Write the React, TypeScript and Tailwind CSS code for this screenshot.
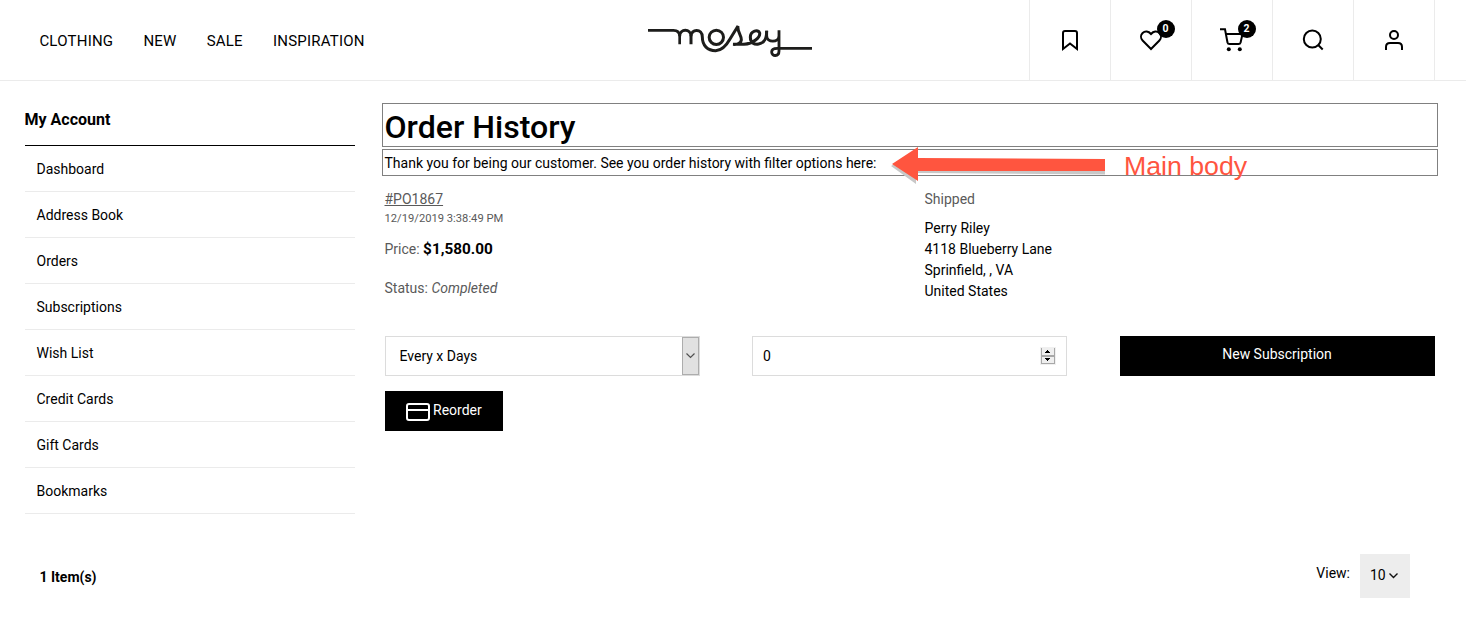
import React from "react";

const navItems = ["CLOTHING", "NEW", "SALE", "INSPIRATION"];

const accountLinks = [
  "Dashboard",
  "Address Book",
  "Orders",
  "Subscriptions",
  "Wish List",
  "Credit Cards",
  "Gift Cards",
  "Bookmarks",
];

function Logo() {
  return (
    <svg width="180" height="50" viewBox="0 0 540 150" fill="none" stroke="#1d1d1b" strokeWidth="9" aria-label="mosey">
      <path d="M24 46H100C113 46 119 53 119 64V88" strokeWidth="8" />
      <path d="M119 64C119 40 153 40 153 64V88" />
      <path d="M153 64C153 40 187 40 187 66C187 92 203 107 227 107C249 107 261 88 270 72L294 33C291 50 305 62 304 75C302 88 292 89 279 88H312C340 86 361 67 359 54C355 42 331 47 331 67C331 85 344 89 356 87C372 84 380 74 380 47" />
      <circle cx="229" cy="67" r="21.500" />
      <path d="M380 47V62C380 84 417 84 417 62V46V108C417 126 395 125 395 111C395 102 402 100 412 100H516" strokeWidth="8.500" />
    </svg>
  );
}

function Badge({ count }: { count: number }) {
  return (
    <span className="absolute left-[46px] top-5 flex size-[18px] items-center justify-center rounded-full bg-black pr-px text-[10.5px] font-bold text-white">
      {count}
    </span>
  );
}

function IconCell({ children }: { children: React.ReactNode }) {
  return (
    <div className="relative flex w-[81px] items-center justify-center border-l border-[#ebebeb]">{children}</div>
  );
}

const line = {
  width: 24,
  height: 24,
  viewBox: "0 0 24 24",
  fill: "none",
  stroke: "#000",
  strokeWidth: 2,
} as const;

function Header() {
  return (
    <header className="flex h-[81px] border-b border-[#ebebeb]">
      <nav className="flex w-[640px] items-center gap-[30.1px] pl-[39.4px] pt-[3px] text-[15px] tracking-[0.22px]">
        {navItems.map((item) => (
          <a key={item}>{item}</a>
        ))}
      </nav>
      <div className="w-[389px] pt-[15px]">
        <Logo />
      </div>
      <IconCell>
        <svg {...line}>
          <path d="M5 21V5Q5 3 7 3H17Q19 3 19 5V21L12 15.500Z" />
        </svg>
      </IconCell>
      <IconCell>
        <svg {...line}>
          <path d="M12 21L3.600 12.500C1.400 10.200 1.600 7 3.600 5C6 2.700 9.500 3.100 12 6C14.500 3.100 18 2.700 20.400 5C22.400 7 22.600 10.200 20.400 12.500Z" />
        </svg>
        <Badge count={0} />
      </IconCell>
      <IconCell>
        <svg {...line}>
          <path d="M0 1.200H5L7.500 14.500Q7.900 16 9.500 16H18.500Q20.200 16 20.600 14.500L22.500 6H5.900" />
          <circle cx="8.800" cy="21.300" r="2" fill="#000" stroke="none" />
          <circle cx="19.800" cy="21.300" r="2" fill="#000" stroke="none" />
        </svg>
        <Badge count={2} />
      </IconCell>
      <IconCell>
        <svg {...line}>
          <circle cx="11.300" cy="11" r="8.500" />
          <path d="M17.200 17L21.700 21.500" />
        </svg>
      </IconCell>
      <IconCell>
        <svg {...line}>
          <circle cx="12" cy="7" r="4" />
          <path d="M4 22V19Q4 15 8 15H16Q20 15 20 19V22" />
        </svg>
      </IconCell>
      <div className="flex-1 border-l border-[#ebebeb]" />
    </header>
  );
}

function Sidebar() {
  return (
    <aside className="w-[330px]">
      <h2 className="h-[65px] border-b border-black pt-[27px] text-[16px] font-bold leading-6">
        <span className="-ml-[0.5px]">My Account</span>
      </h2>
      <ul>
        {accountLinks.map((label) => (
          <li key={label} className="flex h-[46px] items-center border-b border-[#ebebeb] pl-[11.5px] pt-px text-[14px]">
            {label}
          </li>
        ))}
      </ul>
    </aside>
  );
}

function Arrow() {
  return (
    <svg className="absolute left-[507px] -top-[5px]" width="220" height="42" viewBox="0 0 220 42">
      <path d="M1 21L26 39V28L215 29.500V15H26V6Z" fill="#c8c8c8" />
      <path d="M2 19L28 2V13L215 14V26H28V36Z" fill="#ff553f" />
    </svg>
  );
}

function OrderDetails() {
  return (
    <section className="flex h-[160px] pl-[2.5px] text-[14px]">
      <div className="w-[540px] pt-[13px] text-[#5a5a5a]">
        <p className="h-5 leading-5">
          <a className="underline">#PO1867</a>
        </p>
        <p className="h-[18px] pt-px text-[11.2px] leading-[18px]">12/19/2019 3:38:49 PM</p>
        <p className="mt-3 h-5 leading-5">
          Price: <strong className="text-[15.3px] text-black">$1,580.00</strong>
        </p>
        <p className="mt-[19px] leading-5">
          Status: <em>Completed</em>
        </p>
      </div>
      <div className="pt-[13px]">
        <p className="leading-5 text-[#5a5a5a]">Shipped</p>
        <address className="mt-[9px] not-italic leading-[21px]">
          Perry Riley
          <br />
          4118 Blueberry Lane
          <br />
          Sprinfield, , VA
          <br />
          United States
        </address>
      </div>
    </section>
  );
}

function OrderForm() {
  return (
    <section className="pl-[3px] text-[14px]">
      <div className="flex gap-[53px]">
        <div className="flex h-10 w-[315px] items-center justify-between border border-[#dcdcdc] pl-[13.5px]">
          <span>Every x Days</span>
          <span className="flex h-[38px] w-[17px] items-center justify-center border border-[#adadad] bg-[#e1e1e1] pr-px">
            <svg width="9" height="6" viewBox="0 0 9 6" fill="none" stroke="#505050" strokeWidth="1.200">
              <path d="M.5 .5L4.500 4.500L8.500 .5" />
            </svg>
          </span>
        </div>
        <div className="-ml-px flex h-10 w-[315px] items-center justify-between border border-[#dcdcdc] pl-[10px] pr-[10px]">
          <span>0</span>
          <svg width="16" height="18" viewBox="0 0 16 18" shapeRendering="crispEdges">
            <path d="M0 0H16V18H0Z" fill="#f0f0f0" />
            <path d="M1.500 1V8.500H14.500V1M1.500 9.500V16.500H14.500V9.500Z" fill="#efefef" stroke="#a8a8a8" />
            <path d="M7 3H8V4H9V5H10V6H5V5H6V4H7ZM5 11H10V12H9V13H8V14H7V13H6V12H5Z" fill="#000" />
          </svg>
        </div>
        <button className="h-10 w-[315px] bg-black pb-1 pr-px text-white">New Subscription</button>
      </div>
      <button className="mt-[15px] flex h-10 w-[118px] bg-black pl-[21px] text-white">
        <svg className="mt-3" width="24" height="18" viewBox="0 0 24 18" fill="none" stroke="#fff" strokeWidth="2">
          <rect x="1" y="1" width="22" height="16" rx="2" />
          <path d="M1 7H23" />
        </svg>
        <span className="ml-[3px] mt-[9px] leading-5">Reorder</span>
      </button>
    </section>
  );
}

export default function App() {
  return (
    <div className="h-[643px] overflow-hidden bg-white font-['Roboto',sans-serif] text-black">
      <Header />
      <div className="flex h-[473px] gap-[27px] pl-[25px]">
        <Sidebar />
        <main className="w-[1056px] pt-[22px]">
          <h1 className="h-11 border border-[#808080] pl-[1.5px] pt-[3px] text-[32.1px] font-medium leading-10">
            Order History
          </h1>
          <div className="relative mt-[2px] h-[27px] border border-[#808080] pl-[1.5px] pt-[3px] text-[14px] leading-5">
            Thank you for being our customer. See you order history with filter options here:
            <Arrow />
            <span className="absolute left-[741px] top-0 whitespace-nowrap font-['Liberation_Sans',sans-serif] text-[26.7px] leading-8 text-[#ff553f]">
              Main body
            </span>
          </div>
          <OrderDetails />
          <OrderForm />
        </main>
      </div>
      <footer className="flex justify-between pl-[39.5px] pr-14 text-[14px]">
        <span className="pt-[13px] font-bold leading-5">1 Item(s)</span>
        <div className="flex gap-[10px]">
          <span className="pt-[9px] leading-5">View:</span>
          <div className="flex h-11 w-[50px] items-center gap-[3px] bg-[#ededed] pb-px pl-[10px]">
            <span>10</span>
            <svg className="mt-px" width="9" height="6" viewBox="0 0 9 6" fill="none" stroke="#111" strokeWidth="1.400">
              <path d="M.5 .5L4.500 4.500L8.500 .5" />
            </svg>
          </div>
        </div>
      </footer>
    </div>
  );
}
